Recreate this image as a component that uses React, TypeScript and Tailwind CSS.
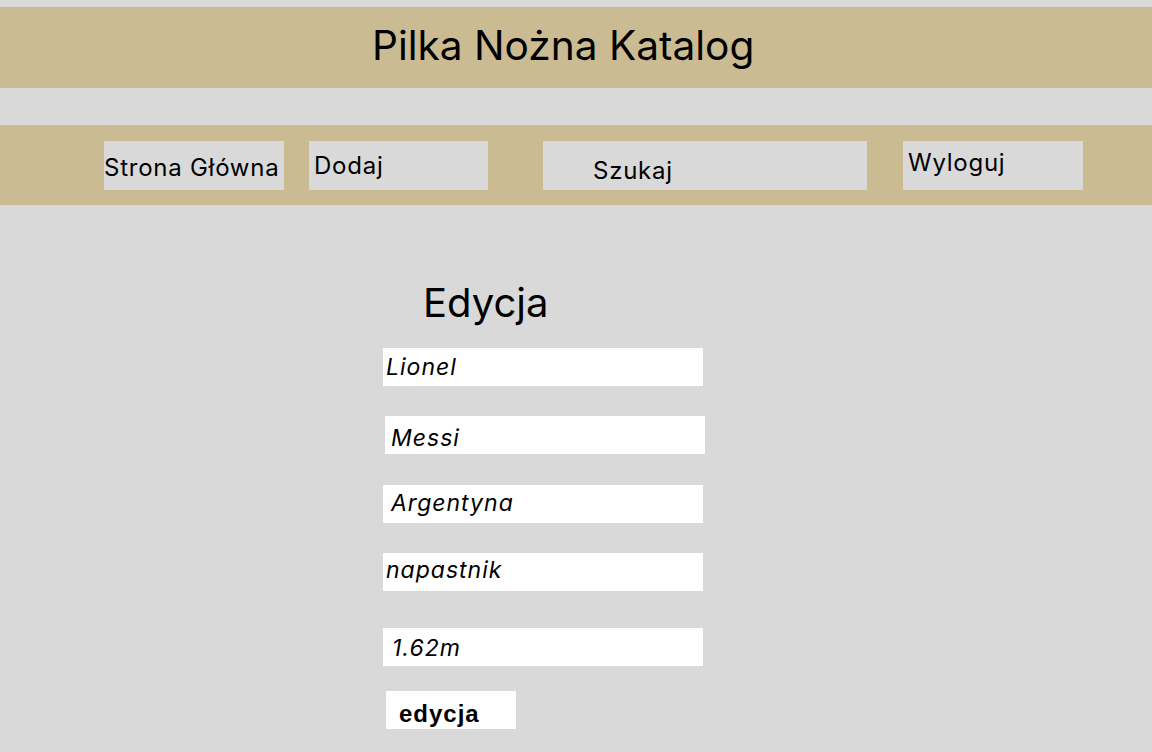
import React from "react";

const inter = "font-['Inter',sans-serif]";
const navText = `${inter} text-[24px] leading-[24px] tracking-[0.75px] text-black`;

const Field = ({ value, className }: { value: string; className: string }) => (
  <div className={`w-[320px] h-[38px] bg-white ${className}`}>
    <p className={`${inter} italic text-[23px] leading-[23px] tracking-[1px] text-black`}>{value}</p>
  </div>
);

const App = () => {
  return (
    <div className="min-h-screen w-full bg-[#d9d9d9] pt-[7px] select-none">
      {/* header */}
      <div className="h-[81px] bg-[#cbbb92] pl-[372px] pt-[19px]">
        <h1 className={`${inter} text-[40.6px] leading-[40px] text-black font-normal`}>
          Pilka Nożna Katalog
        </h1>
      </div>

      {/* nav */}
      <div className="mt-[37px] h-[80px] bg-[#cbbb92] flex flex-row items-start pt-[16px] pl-[104px]">
        <div className="w-[180px] h-[49px] bg-[#d9d9d9] pt-[15px]">
          <p className={navText}>Strona Główna</p>
        </div>
        <div className="ml-[25px] w-[179px] h-[49px] bg-[#d9d9d9] pt-[13px] pl-[5px]">
          <p className={navText}>Dodaj</p>
        </div>
        <div className="ml-[55px] w-[324px] h-[49px] bg-[#d9d9d9] pt-[18px] pl-[50px]">
          <p className={navText}>Szukaj</p>
        </div>
        <div className="ml-[36px] w-[180px] h-[49px] bg-[#d9d9d9] pt-[10px] pl-[5px]">
          <p className={navText}>Wyloguj</p>
        </div>
      </div>

      {/* form */}
      <div className="flex flex-col items-start">
        <h2 className={`${inter} mt-[78px] ml-[423px] text-[40px] leading-[40px] text-black font-normal`}>
          Edycja
        </h2>
        <Field value="Lionel" className="mt-[25px] ml-[383px] pt-[8px] pl-[3px]" />
        <Field value="Messi" className="mt-[30px] ml-[385px] pt-[11px] pl-[6px]" />
        <Field value="Argentyna" className="mt-[31px] ml-[383px] h-[37px] pt-[7px] pl-[8px]" />
        <Field value="napastnik" className="mt-[30px] ml-[383px] pt-[6px] pl-[3px]" />
        <Field value="1.62m" className="mt-[37px] ml-[383px] h-[37px] pt-[9px] pl-[9px]" />
        <button className="mt-[25px] ml-[386px] w-[130px] h-[38px] bg-white pt-[7px] pl-[13px] text-left">
          <span className="block font-['Liberation_Sans',Arial,sans-serif] font-bold text-[24px] leading-[24px] tracking-[1px] text-black">
            edycja
          </span>
        </button>
      </div>
    </div>
  );
};

export default App;
